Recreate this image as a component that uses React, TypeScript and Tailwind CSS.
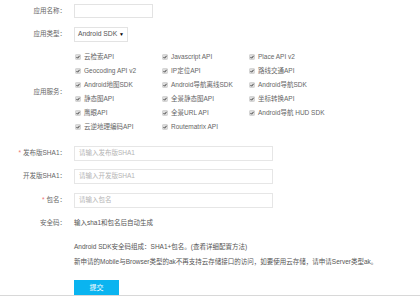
import React from "react";

// --- DATA ---
const SERVICES: string[] = [
  "云检索API", "Javascript API", "Place API v2",
  "Geocoding API v2", "IP定位API", "路线交通API",
  "Android地图SDK", "Android导航离线SDK", "Android导航SDK",
  "静态图API", "全景静态图API", "坐标转换API",
  "鹰眼API", "全景URL API", "Android导航 HUD SDK",
  "云逆地理编码API", "Routematrix API",
];

const Check = () => (
  <svg width="6" height="6" viewBox="0 0 6 6" className="shrink-0">
    <rect x="0.5" y="0.5" width="5" height="5" rx="0.8" fill="#dcdcdc" stroke="#c4c4c4" strokeWidth="0.6" />
    <path d="M1.5 3.1 L2.6 4.2 L4.6 1.8" fill="none" stroke="#333" strokeWidth="0.9" />
  </svg>
);

const Label = ({ text, required }: { text: string; required?: boolean }) => (
  <div className="w-[66px] shrink-0 text-right text-[#666]">
    {required && <span className="text-[#f07070] mr-[2px]">*</span>}
    {text}：
  </div>
);

export default function App() {
  return (
    <div
      className="w-[420px] h-[297px] bg-white overflow-hidden text-[6.5px] leading-none text-[#666]"
      style={{ fontFamily: '"Liberation Sans", "Noto Sans CJK SC", sans-serif' }}
    >
      <div className="flex flex-col">
        {/* app name */}
        <div className="mt-[4px] h-[14px] flex items-center gap-[8px]">
          <Label text="应用名称" />
          <div className="w-[79px] h-[14px] border border-[#e3e3e3]" />
        </div>

        {/* app type */}
        <div className="mt-[9px] h-[15px] flex items-center gap-[8px]">
          <Label text="应用类型" />
          <div className="w-[54px] h-[15px] border border-[#e3e3e3] flex items-center justify-between px-[3px] text-[#555] text-[6.8px]">
            <span>Android SDK</span>
            <span className="text-[5px] text-black">▼</span>
          </div>
        </div>

        {/* services */}
        <div className="mt-[8px] flex items-center gap-[9px]">
          <Label text="应用服务" />
          <div className="grid grid-cols-[87px_87px_87px]">
            {SERVICES.map((s) => (
              <div key={s} className="h-[14px] flex items-center gap-[3px] text-[#666]">
                <Check />
                <span>{s}</span>
              </div>
            ))}
          </div>
        </div>

        {/* sha1 / package */}
        <div className="mt-[12px] h-[15px] flex items-center gap-[8px]">
          <Label text="发布版SHA1" required />
          <div className="w-[199px] h-[15px] border border-[#e6e6e6] flex items-center px-[4px] text-[#b4b4b4]">请输入发布版SHA1</div>
        </div>
        <div className="mt-[8px] h-[15px] flex items-center gap-[8px]">
          <Label text="开发版SHA1" />
          <div className="w-[199px] h-[15px] border border-[#e6e6e6] flex items-center px-[4px] text-[#b4b4b4]">请输入开发版SHA1</div>
        </div>
        <div className="mt-[9px] h-[15px] flex items-center gap-[8px]">
          <Label text="包名" required />
          <div className="w-[199px] h-[15px] border border-[#e6e6e6] flex items-center px-[4px] text-[#b4b4b4]">请输入包名</div>
        </div>

        {/* security code */}
        <div className="mt-[8px] h-[14px] flex items-center gap-[8px]">
          <Label text="安全码" />
          <span className="text-[#555]">输入sha1和包名后自动生成</span>
        </div>

        {/* notes */}
        <div className="ml-[74px] mt-[10px] h-[14px] flex items-center text-[#555]">
          Android SDK安全码组成：SHA1+包名。(查看详细配置方法)
        </div>
        <div className="ml-[74px] mt-[1px] h-[14px] flex items-center text-[#555]">
          新申请的Mobile与Browser类型的ak不再支持云存储接口的访问，如要使用云存储，请申请Server类型ak。
        </div>

        {/* submit */}
        <button className="ml-[74px] mt-[11px] w-[45px] h-[15px] bg-[#0ab4f0] text-white text-[7px] flex items-center justify-center">
          提交
        </button>
        <div className="h-px bg-[#d8d8d8]" />
      </div>
    </div>
  );
}
